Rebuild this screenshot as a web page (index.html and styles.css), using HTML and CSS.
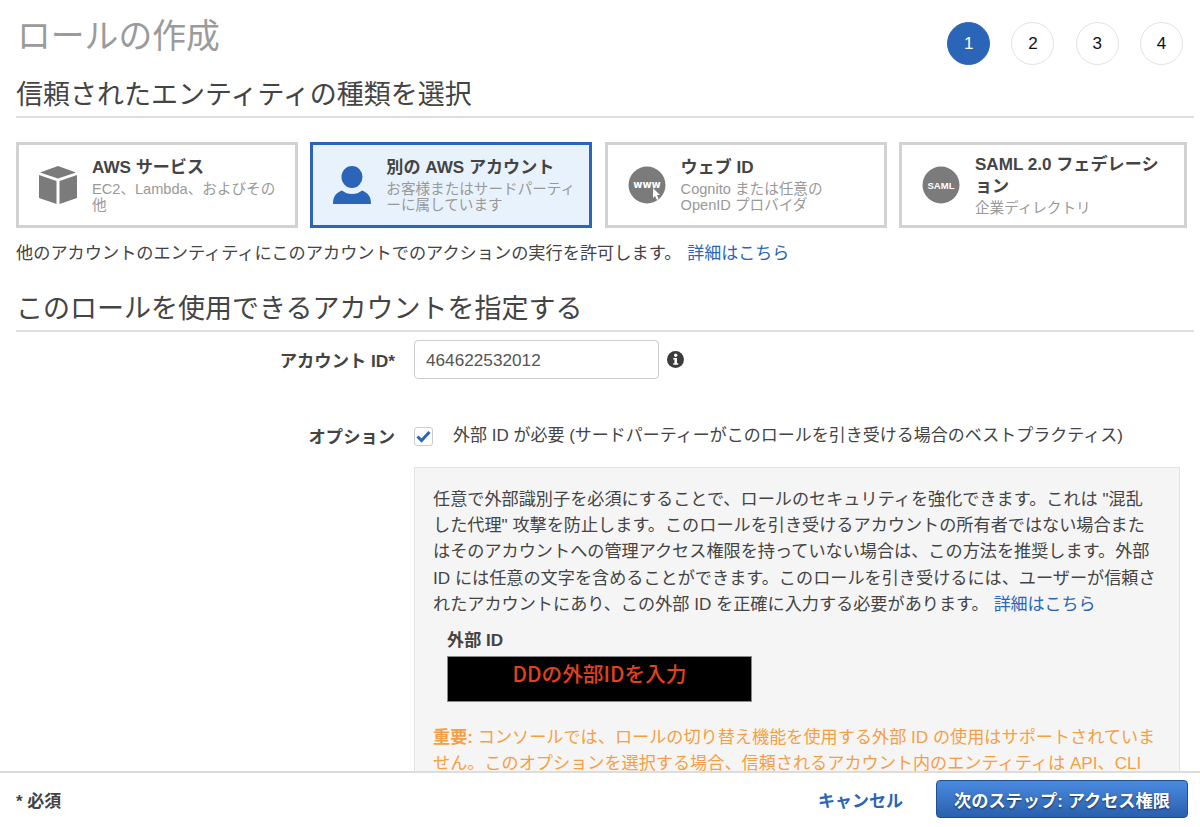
FILE: index.html
```html
<!DOCTYPE html>
<html lang="ja">
<head>
<meta charset="utf-8">
<title>ロールの作成</title>
<link rel="stylesheet" href="styles.css">
</head>
<body>
<main class="page">
  <header class="top">
    <h1 class="title">ロールの作成</h1>
    <ol class="steps">
      <li class="step step-active">1</li>
      <li class="step">2</li>
      <li class="step">3</li>
      <li class="step">4</li>
    </ol>
  </header>

  <h2 class="section section-first">信頼されたエンティティの種類を選択</h2>

  <div class="cards">
    <div class="card">
      <div class="card-icon">
        <svg width="38" height="38" viewBox="0 0 38 38"><path fill="#7b7b7b" d="M19 0 37 6.500 19 12.500 1 6.500ZM0 9 17.500 15V38L0 32ZM38 9 20.500 15V38L38 32Z"/></svg>
      </div>
      <div class="card-text">
        <div class="card-title">AWS サービス</div>
        <div class="card-sub">EC2、Lambda、およびその他</div>
      </div>
    </div>
    <div class="card card-selected">
      <div class="card-icon">
        <svg width="38" height="38" viewBox="0 0 38 38"><ellipse cx="19" cy="11" rx="10.500" ry="11" fill="#2a65b7"/><path fill="#2a65b7" d="M0 38C0 31 2.500 27 9 24.500 12 27 15 28 19 28S26 27 29 24.500C35.500 27 38 31 38 38Z"/></svg>
      </div>
      <div class="card-text">
        <div class="card-title">別の AWS アカウント</div>
        <div class="card-sub">お客様またはサードパーティーに属しています</div>
      </div>
    </div>
    <div class="card">
      <div class="card-icon">
        <svg width="38" height="38" viewBox="0 0 38 38"><circle cx="19" cy="19" r="18.500" fill="#7b7b7b"/><text x="19" y="21.500" class="icon-label icon-label-www">www</text><path fill="#fff" d="M25 22 32 29 29 29 30.500 33 29 34 27 30 25 32Z"/></svg>
      </div>
      <div class="card-text">
        <div class="card-title">ウェブ ID</div>
        <div class="card-sub">Cognito または任意の<br>OpenID プロバイダ</div>
      </div>
    </div>
    <div class="card">
      <div class="card-icon">
        <svg width="38" height="38" viewBox="0 0 38 38"><circle cx="19" cy="19" r="18.500" fill="#7b7b7b"/><text x="19" y="22.500" class="icon-label icon-label-saml">SAML</text></svg>
      </div>
      <div class="card-text">
        <div class="card-title">SAML 2.0 フェデレーション</div>
        <div class="card-sub">企業ディレクトリ</div>
      </div>
    </div>
  </div>

  <p class="help">他のアカウントのエンティティにこのアカウントでのアクションの実行を許可します。<a class="link link-help" href="#">詳細はこちら</a></p>

  <h2 class="section section-second">このロールを使用できるアカウントを指定する</h2>

  <form class="form">
    <label class="form-label form-label-id">アカウント ID*</label>
    <div class="id-field">
      <div class="input">464622532012</div>
      <svg class="info" width="17" height="17" viewBox="0 0 17 17"><circle cx="8.500" cy="8.500" r="8.500" fill="#3c3c3c"/><circle cx="8.700" cy="4.200" r="1.700" fill="#fff"/><path fill="#fff" d="M6.200 7H10V12.300H11.200V13.800H6.200V12.300H7.400V8.500H6.200Z"/></svg>
    </div>

    <label class="form-label form-label-opt">オプション</label>
    <div class="opt-field">
      <div class="check-row">
        <span class="checkbox">
          <svg width="15" height="13" viewBox="0 0 15 13"><path fill="none" stroke="#2a65b7" stroke-width="3" d="M1.500 6.500 5.500 10.500 13.500 2"/></svg>
        </span>
        <span class="check-text">外部 ID が必要 (サードパーティーがこのロールを引き受ける場合のベストプラクティス)</span>
      </div>
      <div class="box">
        <p class="box-text">任意で外部識別子を必須にすることで、ロールのセキュリティを強化できます。これは "混乱<br>した代理" 攻撃を防止します。このロールを引き受けるアカウントの所有者ではない場合また<br>はそのアカウントへの管理アクセス権限を持っていない場合は、この方法を推奨します。外部<br>ID には任意の文字を含めることができます。このロールを引き受けるには、ユーザーが信頼さ<br>れたアカウントにあり、この外部 ID を正確に入力する必要があります。<a class="link link-box" href="#">詳細はこちら</a></p>
        <div class="ext-label">外部 ID</div>
        <div class="ext-input">DDの外部IDを入力</div>
        <p class="warn"><strong>重要:</strong> コンソールでは、ロールの切り替え機能を使用する外部 ID の使用はサポートされていま<br>せん。このオプションを選択する場合、信頼されるアカウント内のエンティティは API、CLI</p>
      </div>
    </div>
  </form>
</main>

<footer class="footer">
  <span class="required">* 必須</span>
  <div class="actions">
    <a class="cancel" href="#">キャンセル</a>
    <button class="next" type="button">次のステップ: アクセス権限</button>
  </div>
</footer>
</body>
</html>
```

FILE: styles.css
```css
* { box-sizing: border-box; }

html, body {
  margin: 0;
  height: 827px;
  overflow: hidden;
  background: #fff;
}

body {
  position: relative;
  font-family: "Liberation Sans", "Noto Sans CJK JP", sans-serif;
  font-size: 17px;
  color: #444;
}

.page { padding: 0 6px 0 16px; }

.top {
  display: flex;
  justify-content: space-between;
  height: 65px;
}

.title {
  margin: 14px 0 0;
  padding-left: 1px;
  font-size: 33.800px;
  line-height: 44px;
  font-weight: 400;
  color: #9b9b9b;
}

.steps {
  list-style: none;
  display: flex;
  gap: 21.300px;
  margin: 22px 11px 0 0;
  padding: 0;
}

.step {
  width: 43px;
  height: 43px;
  border: 1px solid #e2e2e2;
  border-radius: 50%;
  display: flex;
  align-items: center;
  justify-content: center;
  font-size: 17px;
  color: #111;
}

.step-active {
  background: #2a65b7;
  border-color: #2a65b7;
  color: #fff;
}

.section {
  margin: 0;
  font-size: 27px;
  line-height: 38px;
  font-weight: 400;
  color: #444;
  border-bottom: 2px solid #ddd;
}

.section-first { padding: 11px 0 2px; margin-bottom: 24px; }
.section-second { padding: 0 0 2px; margin-top: 23px; }

.cards {
  display: grid;
  grid-template-columns: 282px 282px 282px 288px;
  gap: 12.300px;
}

.card {
  display: flex;
  align-items: center;
  height: 86px;
  border: 3px solid #d2d2d2;
  background: #fff;
  padding-right: 12px;
}

.card-selected {
  border-color: #2a65b7;
  background: #e8f2fc;
}

.card-icon {
  flex: 0 0 73px;
  display: flex;
  padding-left: 20px;
}

.card-icon svg { display: block; }

.icon-label {
  fill: #fff;
  font-weight: 700;
  text-anchor: middle;
}

.icon-label-www { font-family: "DejaVu Sans", sans-serif; font-size: 10px; }
.icon-label-saml { font-family: "Liberation Sans", sans-serif; font-size: 9.500px; }

.card-text { min-width: 0; }

.card-title {
  font-size: 17.100px;
  line-height: 22px;
  font-weight: 700;
  color: #444;
}

.card-sub {
  margin-top: 2px;
  font-size: 14.600px;
  line-height: 16px;
  color: #999;
}

.help {
  margin: 12px 0 0;
  font-size: 17.200px;
  line-height: 26px;
  color: #444;
}

.link { color: #2a65b7; text-decoration: none; font-size: 17px; }
.link-help { margin-left: 6px; }
.link-box { margin-left: 5px; }

.form {
  display: grid;
  grid-template-columns: 379px 1fr;
  column-gap: 19px;
  margin-top: 8px;
}

.form-label {
  text-align: right;
  font-weight: 700;
  font-size: 17.300px;
  line-height: 24px;
  color: #444;
}

.form-label-id { padding-top: 9px; }
.form-label-opt { padding-top: 46px; }

.id-field {
  display: flex;
  align-items: center;
  gap: 8px;
}

.input {
  width: 245px;
  height: 39px;
  padding: 0 11px;
  border: 1px solid #ccc;
  border-radius: 4px;
  background: #fff;
  font-size: 17.200px;
  line-height: 38px;
  color: #555;
}

.opt-field { padding-top: 47px; }

.check-row {
  display: flex;
  align-items: center;
  height: 20px;
}

.checkbox {
  width: 19px;
  height: 19px;
  border: 1px solid #ccc;
  border-radius: 3px;
  background: #fff;
  display: flex;
  align-items: center;
  justify-content: center;
}

.check-text {
  margin-left: 20px;
  font-size: 17px;
  line-height: 24px;
  white-space: nowrap;
}

.box {
  margin-top: 21px;
  height: 380px;
  margin-right: 14px;
  padding: 18px 18px 0 18px;
  background: #f5f5f5;
  border: 1px solid #e3e3e3;
}

.box-text {
  margin: 0;
  font-size: 17.150px;
  line-height: 26.200px;
  color: #444;
  white-space: nowrap;
}

.ext-label {
  margin: 10px 0 0 14px;
  font-weight: 700;
  font-size: 17.150px;
  line-height: 24px;
}

.ext-input {
  margin: 4px 0 0 14px;
  width: 305px;
  height: 46px;
  padding-top: 3px;
  background: #000;
  border: 1px solid #8a8a8a;
  color: #e2411f;
  font-family: "Noto Sans CJK JP", sans-serif;
  font-weight: 500;
  font-size: 20.700px;
  line-height: 26px;
  text-align: center;
}

.warn {
  margin: 22px 0 0;
  font-size: 17.150px;
  line-height: 26px;
  color: #f59f42;
  white-space: nowrap;
}

.footer {
  position: absolute;
  left: 0;
  right: 0;
  top: 771px;
  bottom: 0;
  display: flex;
  align-items: center;
  justify-content: space-between;
  padding: 0 12px 2px 16px;
  background: #fff;
  border-top: 2px solid #ddd;
}

.required {
  font-weight: 700;
  font-size: 17px;
  color: #444;
}

.actions {
  display: flex;
  align-items: center;
  gap: 33px;
}

.cancel {
  font-weight: 700;
  font-size: 17px;
  color: #2a65b7;
  text-decoration: none;
}

.next {
  width: 252px;
  height: 38px;
  padding: 0;
  border: 1px solid #1f4f94;
  border-radius: 4px;
  background: linear-gradient(#4a8ae0, #2a60ad);
  color: #fff;
  font: 700 17.200px "Liberation Sans", "Noto Sans CJK JP", sans-serif;
  text-shadow: 0 1px 2px rgba(0, 0, 0, 0.6);
}
```
